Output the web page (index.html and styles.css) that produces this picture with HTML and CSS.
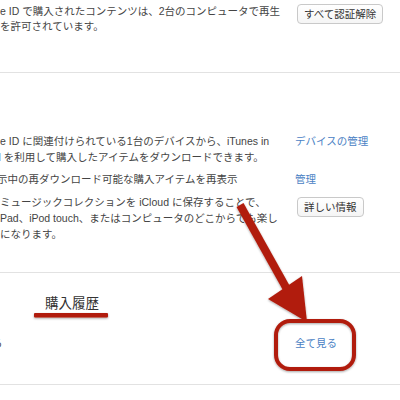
FILE: index.html
```html
<!DOCTYPE html>
<html lang="ja">
<head>
<meta charset="utf-8">
<link rel="stylesheet" href="styles.css">
</head>
<body>
<div class="page">
  <section class="row r1">
    <div class="item">
      <p class="txt">e ID で購入されたコンテンツは、2台のコンピュータで再生<br>を許可されています。</p>
      <div class="side"><button class="btn">すべて認証解除</button></div>
    </div>
  </section>
  <section class="row r2">
    <div class="item">
      <p class="txt">e ID に関連付けられている1台のデバイスから、iTunes in<br><span class="clip clip-d">d</span> を利用して購入したアイテムをダウンロードできます。</p>
      <div class="side"><a class="link">デバイスの管理</a></div>
    </div>
    <div class="item item-b">
      <p class="txt"><span class="clip clip-s">示</span>中の再ダウンロード可能な購入アイテムを再表示</p>
      <div class="side"><a class="link">管理</a></div>
    </div>
    <div class="item item-c">
      <p class="txt">ミュージックコレクションを iCloud に保存することで、<br>Pad、iPod touch、またはコンピュータのどこからでも楽し<br>になります。</p>
      <div class="side"><button class="btn btn-info">詳しい情報</button></div>
    </div>
  </section>
  <section class="row r3">
    <h2 class="heading">購入履歴</h2>
    <div class="item item-h">
      <p class="txt"><span class="clip clip-r">る</span></p>
      <div class="side"><a class="link">全て見る</a></div>
    </div>
  </section>
</div>
<svg class="annot" width="400" height="400" viewBox="0 0 400 400">
  <defs>
    <filter id="sh" x="-20%" y="-20%" width="140%" height="140%">
      <feDropShadow dx="0" dy="1" stdDeviation="1.2" flood-color="#000" flood-opacity="0.35"/>
    </filter>
  </defs>
  <g filter="url(#sh)" fill="#b11d0d" stroke="none">
    <rect x="34" y="313" width="74" height="4.5" rx="1"/>
    <line x1="240" y1="205" x2="288" y2="291" stroke="#b11d0d" stroke-width="8"/>
    <polygon points="268,299 302,276 307,322"/>
    <rect x="276" y="321" width="78" height="48" rx="14" fill="none" stroke="#b11d0d" stroke-width="4"/>
  </g>
</svg>
</body>
</html>
```
FILE: styles.css
```css
html, body {
  margin: 0;
  padding: 0;
  background: #fff;
}
body {
  width: 400px;
  height: 400px;
  overflow: hidden;
  position: relative;
  font-family: "Liberation Sans", "Noto Sans CJK JP", sans-serif;
  font-size: 10.5px;
  color: #444;
}
.page {
  width: 400px;
}
.row {
  box-sizing: border-box;
  border-bottom: 1px solid #e2e2e2;
}
.r1 {
  height: 73px;
  padding-top: 4px;
}
.r2 {
  height: 200px;
  padding-top: 60px;
  display: flex;
  flex-direction: column;
  gap: 6px;
}
.r3 {
  height: 112px;
  padding-top: 22px;
}
.item {
  display: grid;
  grid-template-columns: 295px 1fr;
  align-items: start;
}
.txt {
  margin: 0;
  line-height: 16px;
  white-space: nowrap;
}
.r1 .txt {
  line-height: 15px;
}
.clip {
  display: inline-block;
}
.clip-d { margin-left: -5px; }
.clip-s { margin-left: -3px; }
.clip-r { margin-left: -8px; }
.item-c {
  margin-top: 1px;
}
.side {
  display: flex;
}
.link {
  color: #4b82c4;
  line-height: 16px;
  white-space: nowrap;
}
.btn {
  font: inherit;
  color: #333;
  background: linear-gradient(#ffffff, #f5f5f5);
  border: 1px solid #c9c9c9;
  border-radius: 4px;
  height: 20px;
  padding: 0 6px;
  margin-left: 2px;
  line-height: 18px;
  white-space: nowrap;
}
.btn-info {
  margin-top: 3px;
}
.heading {
  margin: 0 0 0 45px;
  font-size: 13.5px;
  font-weight: normal;
  color: #333;
  line-height: 18px;
}
.item-h {
  margin-top: 22px;
}
.annot {
  position: absolute;
  left: 0;
  top: 0;
  pointer-events: none;
}
```
